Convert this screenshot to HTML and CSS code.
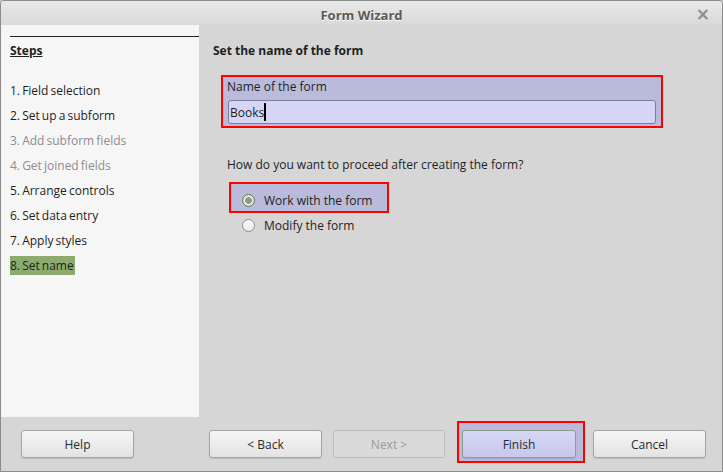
FILE: index.html
```html
<!DOCTYPE html>
<html>
<head>
<meta charset="utf-8">
<link rel="stylesheet" href="styles.css">
</head>
<body>
<div class="window">
  <div class="titlebar">
    <span class="title">Form Wizard</span>
    <span class="close">×</span>
  </div>
  <div class="main">
    <div class="sidebar">
      <div class="rule"></div>
      <div class="steps-title">Steps</div>
      <ul class="steps">
        <li>1. Field selection</li>
        <li>2. Set up a subform</li>
        <li class="disabled">3. Add subform fields</li>
        <li class="disabled">4. Get joined fields</li>
        <li>5. Arrange controls</li>
        <li>6. Set data entry</li>
        <li>7. Apply styles</li>
        <li><span class="current">8. Set name</span></li>
      </ul>
    </div>
    <div class="content">
      <div class="heading">Set the name of the form</div>
      <div class="namebox hl">
        <div class="label">Name of the form</div>
        <div class="input"><span>Books</span><span class="caret"></span></div>
      </div>
      <div class="question">How do you want to proceed after creating the form?</div>
      <div class="options">
        <div class="option hl sel">
          <span class="radio checked"></span>
          <span>Work with the form</span>
        </div>
        <div class="option">
          <span class="radio"></span>
          <span>Modify the form</span>
        </div>
      </div>
    </div>
  </div>
  <div class="footer">
    <button class="btn help">Help</button>
    <button class="btn back">&lt; Back</button>
    <button class="btn next" disabled>Next &gt;</button>
    <div class="finishbox hl"><button class="btn finish">Finish</button></div>
    <button class="btn cancel">Cancel</button>
  </div>
</div>
</body>
</html>
```
FILE: styles.css
```css
* { box-sizing: border-box; }
html, body { margin: 0; padding: 0; }
body {
  width: 723px;
  height: 472px;
  background: #c9c9c9;
  font-family: "Open Sans", "Noto Sans", sans-serif;
  font-size: 12px;
  color: #1f1f1f;
  overflow: hidden;
}
.window {
  width: 723px;
  height: 472px;
  border: 1px solid #8b8b8b;
  border-radius: 4px 4px 0 0;
  background: #d6d6d6;
  display: flex;
  flex-direction: column;
  overflow: hidden;
}
.titlebar {
  height: 24px;
  flex: none;
  background: linear-gradient(#e9e9e9, #d9d9d9);
  display: flex;
  align-items: center;
  justify-content: center;
  position: relative;
}
.title {
  font-weight: bold;
  font-size: 13px;
  color: #5a5a5a;
  text-shadow: 0 1px 0 #fff;
  margin-top: 4px;
}
.close {
  position: absolute;
  right: 12px;
  top: 3px;
  font-size: 17px;
  font-weight: bold;
  color: #8e8e8e;
  font-family: "DejaVu Sans", sans-serif;
}
.main {
  height: 392px;
  flex: none;
  display: flex;
}
.sidebar {
  width: 198px;
  flex: none;
  background: #f6f6f6;
  padding: 11px 0 0 9px;
}
.rule {
  height: 1px;
  background: #222;
}
.steps-title {
  font-weight: bold;
  text-decoration: underline;
  line-height: 17px;
  margin-top: 5px;
}
.steps {
  list-style: none;
  margin: 22px 0 0;
  padding: 0;
  display: flex;
  flex-direction: column;
  gap: 6px;
}
.steps li {
  line-height: 19px;
  height: 19px;
  word-spacing: -1px;
}
.steps li.disabled { color: #8d8d8d; }
.current {
  display: inline-block;
  background: #8cab6c;
  padding-right: 1px;
}
.content {
  flex: 1;
  padding: 17px 0 0 14px;
}
.heading {
  font-weight: bold;
  line-height: 17px;
}
.hl {
  border: 2px solid #f00;
  background: #babbda;
}
.namebox {
  margin: 16px 0 0 8px;
  width: 442px;
  padding: 1px 5px 2px 4px;
}
.label { line-height: 17px; }
.input {
  margin: 5px 0 0 1px;
  height: 24px;
  background: #d5d6f3;
  border: 1px solid #7d7d9c;
  border-radius: 3px;
  padding: 0 0 0 1px;
  display: flex;
  align-items: center;
}
.caret {
  display: inline-block;
  width: 2px;
  height: 18px;
  background: #000;
}
.question {
  margin: 28px 0 0 14px;
  line-height: 17px;
}
.options {
  margin: 9px 0 0 16px;
  display: flex;
  flex-direction: column;
}
.option {
  display: flex;
  align-items: center;
  gap: 9px;
  height: 24px;
  padding-left: 13px;
}
.option.sel {
  width: 160px;
  height: 31px;
  padding: 5px 0 0 11px;
}
.radio {
  width: 13px;
  height: 13px;
  border-radius: 50%;
  border: 1px solid #8f8f8f;
  background: linear-gradient(#fdfdfd, #e8e8e8);
  flex: none;
}
.radio.checked {
  border-color: #66735f;
  background: radial-gradient(circle, #8a9b84 0, #8a9b84 3px, #dde4d8 3.5px, #dde4d8 100%);
}
.footer {
  flex: 1;
  display: flex;
  align-items: flex-start;
  padding: 4px 0 0 20px;
}
.btn {
  font-family: "Open Sans", "Noto Sans", sans-serif;
  font-size: 12px;
  color: #2a2a2a;
  width: 113px;
  height: 28px;
  margin-top: 9px;
  border: 1px solid #a5a5a5;
  border-radius: 3px;
  background: linear-gradient(#f5f5f5, #e3e3e3);
  box-shadow: 0 1px 1px rgba(0,0,0,0.12);
  padding: 0;
}
.back { margin-left: 75px; }
.next {
  margin-left: 11px;
  width: 112px;
  color: #9a9a9a;
  background: #dadada;
  border-color: #bcbcbc;
  box-shadow: none;
}
.finishbox {
  margin-left: 12px;
  padding: 7px 7px 3px 3px;
}
.finish {
  margin-top: 0;
  width: 114px;
  background: linear-gradient(#d7d8f5, #c6c7ea);
  border-color: #8e9e8c;
}
.cancel { margin-left: 8px; }
```
